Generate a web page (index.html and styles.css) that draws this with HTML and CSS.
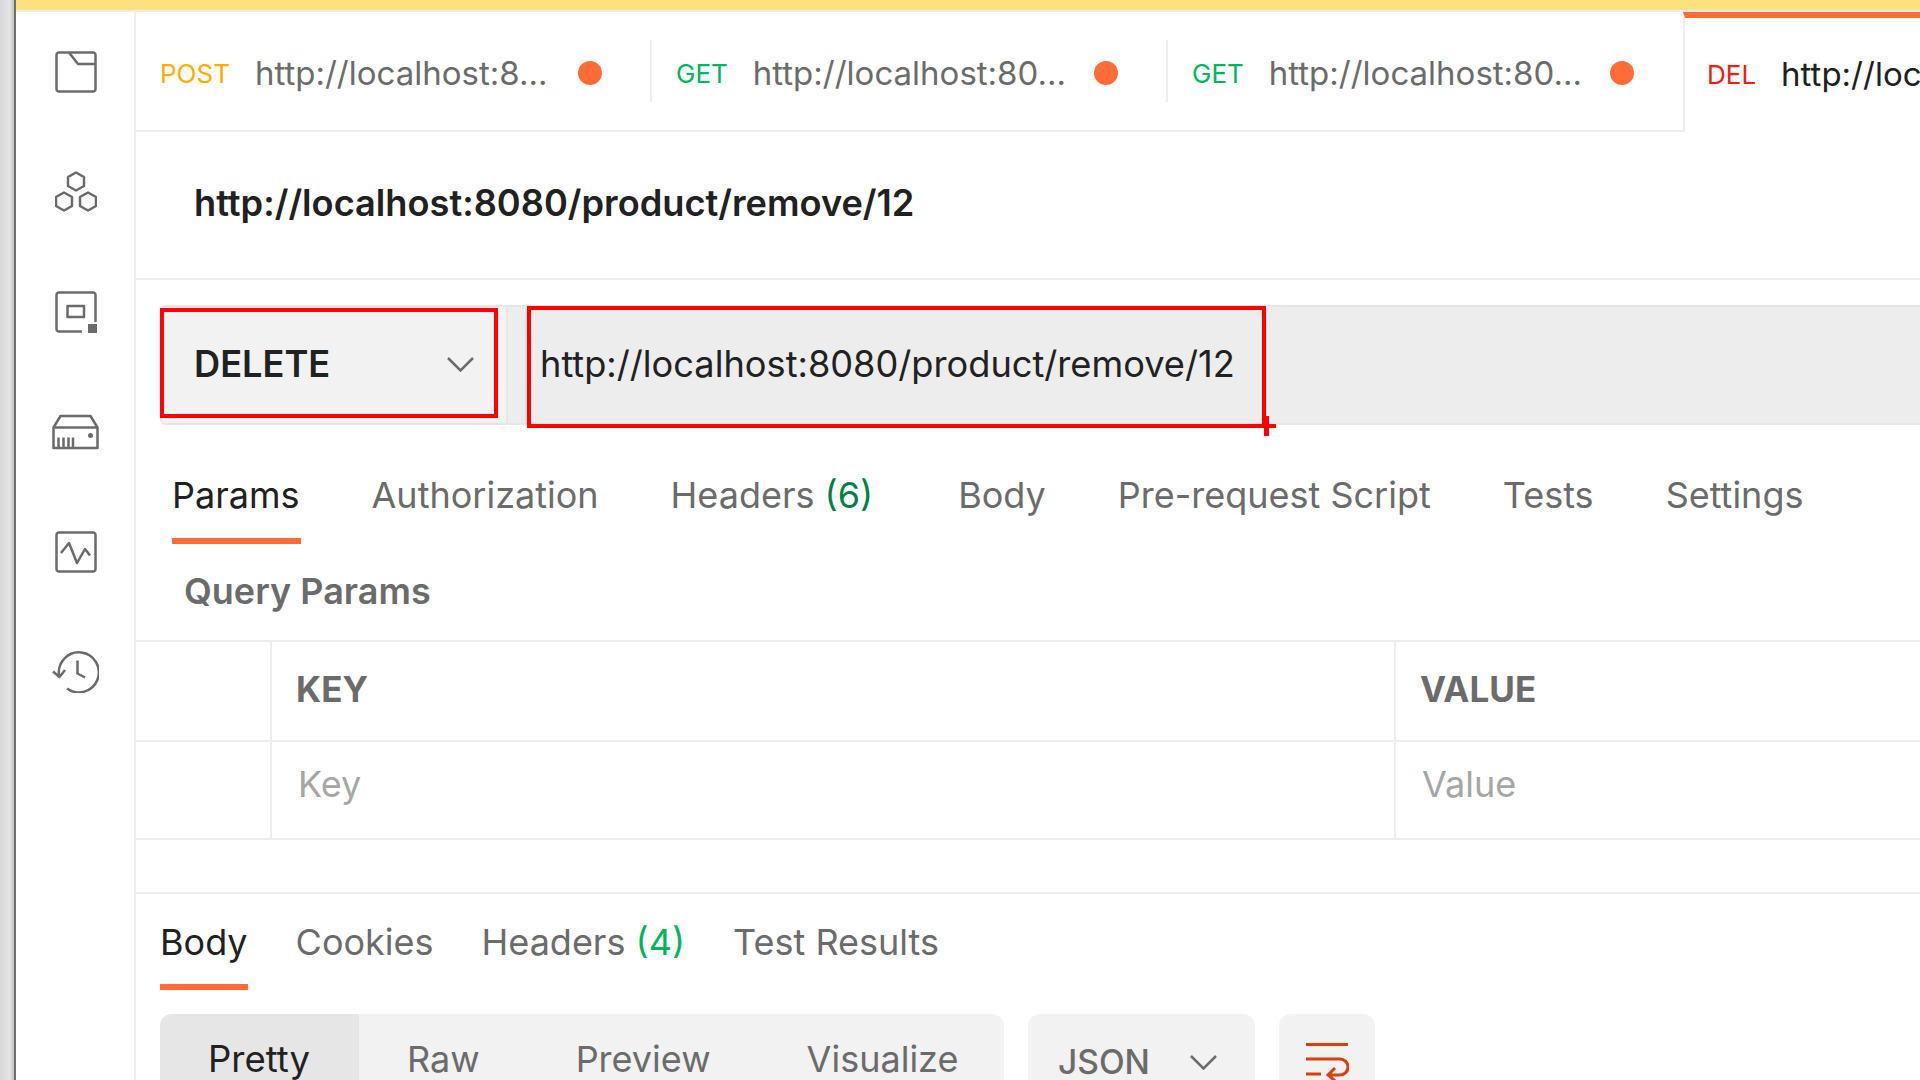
FILE: index.html
```html
<!DOCTYPE html>
<html lang="en">
<head>
    <meta charset="UTF-8">
    <title>Postman request</title>
    <link rel="stylesheet" href="styles.css">
</head>
<body>
    <div class="strip"></div>
    <div class="main">
        <div class="notice"></div>
        <div class="app">
            <nav class="sidebar">
                <svg class="nav-icon" viewBox="0 0 42 42"><path d="M4 1.500h34a2.500 2.500 0 0 1 2.500 2.500v34a2.500 2.500 0 0 1-2.500 2.500H4A2.500 2.500 0 0 1 1.500 38V4A2.500 2.500 0 0 1 4 1.500zM14 1.500l9 11.500h17.500"/></svg>
                <svg class="nav-icon" viewBox="0 0 42 42"><path d="M21 1.500l8 4.500v9l-8 4.500-8-4.500V6zM9 21.500l8 4.500v9l-8 4.500L1 35v-9zM33 21.500l8 4.500v9l-8 4.500-8-4.500v-9z"/></svg>
                <svg class="nav-icon" viewBox="0 0 42 42"><path d="M27 40.500H4A2.500 2.500 0 0 1 1.500 38V4A2.500 2.500 0 0 1 4 1.500h34A2.500 2.500 0 0 1 40.500 4v27M12.500 15h16.500v11H12.500z"/><rect class="fill" x="33" y="33" width="9" height="9"/></svg>
                <svg class="nav-icon wide" viewBox="0 0 47 35"><path d="M1.500 33.500V13L8.500 1.500h30L45.500 13v20.500zM1.500 13h44M6.500 33.500V23M11.500 33.500V23M16.500 33.500V23M21 33.500V23"/><circle class="fill" cx="38.500" cy="21" r="2.500"/></svg>
                <svg class="nav-icon" viewBox="0 0 42 42"><path d="M4 1.500h34A2.500 2.500 0 0 1 40.500 4v34a2.500 2.500 0 0 1-2.500 2.500H4A2.500 2.500 0 0 1 1.500 38V4A2.500 2.500 0 0 1 4 1.500zM6 22l8-10 8 20 8-14 5 6.500"/></svg>
                <svg class="nav-icon wide" viewBox="0 0 47 42"><path d="M7 24A20 20 0 1 1 15 37.500M1 20.500l6.500 5.500L13 19M25.500 9.500v13L33 26.500"/></svg>
            </nav>
            <section class="content">
                <div class="tabs">
                    <div class="tab first"><span class="method post">POST</span><span class="tab-url">http://localhost:8...</span><span class="dot"></span></div>
                    <div class="tab"><span class="method get">GET</span><span class="tab-url">http://localhost:80...</span><span class="dot"></span></div>
                    <div class="tab last"><span class="method get">GET</span><span class="tab-url">http://localhost:80...</span><span class="dot"></span></div>
                    <div class="tab active"><span class="method del">DEL</span><span class="tab-url">http://localhost:8080/product/remove/12</span></div>
                </div>
                <h1 class="title">http://localhost:8080/product/remove/12</h1>
                <div class="request">
                    <div class="verb"><span>DELETE</span><svg class="chevron" viewBox="0 0 27 15"><path d="M1 1l12.500 12.500L26 1"/></svg></div>
                    <div class="address">http://localhost:8080/product/remove/12</div>
                    <div class="mark mark-verb"></div>
                    <div class="mark mark-url"></div>
                    <div class="cursor"></div>
                </div>
                <div class="req-tabs">
                    <span class="req-tab on">Params</span>
                    <span class="req-tab">Authorization</span>
                    <span class="req-tab headers">Headers <em class="count dark">(6)</em></span>
                    <span class="req-tab">Body</span>
                    <span class="req-tab">Pre-request Script</span>
                    <span class="req-tab">Tests</span>
                    <span class="req-tab">Settings</span>
                </div>
                <div class="query-title">Query Params</div>
                <div class="row head">
                    <div class="cell check"></div>
                    <div class="cell key">KEY</div>
                    <div class="cell">VALUE</div>
                </div>
                <div class="row empty">
                    <div class="cell check"></div>
                    <div class="cell key">Key</div>
                    <div class="cell">Value</div>
                </div>
                <div class="gap"></div>
                <div class="res-tabs">
                    <span class="res-tab on">Body</span>
                    <span class="res-tab">Cookies</span>
                    <span class="res-tab">Headers <em class="count">(4)</em></span>
                    <span class="res-tab">Test Results</span>
                </div>
                <div class="toolbar">
                    <div class="views">
                        <span class="view on">Pretty</span>
                        <span class="view">Raw</span>
                        <span class="view">Preview</span>
                        <span class="view">Visualize</span>
                    </div>
                    <div class="format"><span>JSON</span><svg class="chevron" viewBox="0 0 27 15"><path d="M1 1l12.500 12.500L26 1"/></svg></div>
                    <div class="wrap">
                        <svg viewBox="0 0 44 40"><path d="M1 1.500h42M1 16h34a8 8 0 0 1 0 16H24M1 31h15M30 25l-7 7 7 6"/></svg>
                    </div>
                </div>
            </section>
        </div>
    </div>
</body>
</html>
```

FILE: styles.css
```css
* {
    box-sizing: border-box;
}
html, body {
    margin: 0;
    height: 1080px;
    overflow: hidden;
}
body {
    display: flex;
    font-family: Inter, "Liberation Sans", sans-serif;
    background-color: #fff;
    color: #6b6b6b;
}
.strip {
    width: 16px;
    flex: none;
    background: linear-gradient(to right, #d8d8d8, #e4e4e4 60%, #c4c4c4 86%, #6e6e6e 87%);
}
.main {
    flex: 1;
    min-width: 0;
}
.notice {
    height: 12px;
    background-color: #ffe07f;
    border-bottom: 2px solid #ededed;
}
.app {
    display: flex;
    height: 1068px;
}
.sidebar {
    width: 120px;
    flex: none;
    border-right: 2px solid #ededed;
    display: flex;
    flex-direction: column;
    align-items: center;
    padding: 39px 0 0 1px;
    gap: 78px;
}
.nav-icon {
    width: 42px;
    height: 42px;
    flex: none;
    fill: none;
    stroke: #6b6b6b;
    stroke-width: 2.500;
    stroke-linejoin: round;
}
.nav-icon.wide {
    width: 47px;
}
.nav-icon .fill {
    fill: #6b6b6b;
    stroke: none;
}
.content {
    flex: 1;
    min-width: 0;
    overflow: hidden;
}

/* open tabs */
.tabs {
    display: flex;
    height: 120px;
    border-bottom: 2px solid #ededed;
    align-items: stretch;
}
.tab {
    width: 516px;
    flex: none;
    display: flex;
    align-items: center;
    gap: 25px;
    padding: 4px 0 0 26px;
    position: relative;
    font-size: 33px;
}
.tab.first {
    width: 514px;
    padding-left: 24px;
}
.tab.last {
    width: 517px;
}
.tab + .tab::before {
    content: "";
    position: absolute;
    left: 0;
    top: 28px;
    bottom: 28px;
    width: 2px;
    background-color: #ededed;
}
.method {
    font-size: 26px;
    flex: none;
}
.post { color: #ffad00; }
.get { color: #00b35f; }
.del { color: #eb2013; }
.tab-url {
    white-space: nowrap;
    flex: none;
}
.dot {
    width: 24px;
    height: 24px;
    border-radius: 50%;
    background-color: #ff6c37;
    flex: none;
    margin-left: 3px;
}
.first .dot {
    margin-left: 6px;
}
.tab.active {
    background-color: #fff;
    border-top: 6px solid #ff6c37;
    border-left: 2px solid #ededed;
    margin-bottom: -2px;
    flex: 1;
    min-width: 0;
    padding: 0 0 2px 22px;
    overflow: hidden;
}
.tab.active::before {
    display: none;
}
.tab.active .tab-url {
    color: #212121;
}

/* title */
.title {
    margin: 0;
    height: 148px;
    padding: 0 0 4px 58px;
    border-bottom: 2px solid #ededed;
    display: flex;
    align-items: center;
    font-size: 36.200px;
    font-weight: 600;
    color: #212121;
}

/* request bar */
.request {
    margin: 25px 0 0 24px;
    height: 120px;
    position: relative;
    display: flex;
    font-size: 36.200px;
    border: 2px solid #e6e6e6;
    border-right: none;
    border-radius: 6px 0 0 6px;
    color: #212121;
}
.verb {
    width: 346px;
    flex: none;
    background-color: #f2f2f2;
    border-right: 2px solid #e6e6e6;
    display: flex;
    align-items: center;
    justify-content: space-between;
    padding: 0 32px 2px 32px;
    font-weight: 600;
}
.verb .chevron {
    width: 27px;
    height: 15px;
}
.chevron {
    fill: none;
    stroke: #6b6b6b;
    stroke-width: 2.500;
}
.address {
    flex: 1;
    background-color: #ededed;
    display: flex;
    align-items: center;
    padding: 0 0 2px 32px;
    white-space: nowrap;
}
.mark {
    position: absolute;
    border: 4px solid #fe0000;
}
.mark-verb {
    left: -2px;
    top: 1px;
    width: 338px;
    height: 110px;
}
.mark-url {
    left: 365px;
    top: -1px;
    width: 739px;
    height: 122px;
}
.cursor {
    position: absolute;
    left: 1102px;
    top: 109px;
    width: 5px;
    height: 20px;
    background-color: #fe0000;
}
.cursor::after {
    content: "";
    position: absolute;
    left: -7px;
    top: 8px;
    width: 19px;
    height: 4px;
    background-color: #fe0000;
}

/* request tabs */
.req-tabs {
    display: flex;
    height: 119px;
    padding-left: 36px;
    gap: 71px;
    font-size: 36px;
    line-height: 44px;
}
.req-tab {
    padding: 48px 1px 0 0;
    white-space: nowrap;
    border-bottom: 6px solid transparent;
}
.req-tab.on {
    color: #212121;
    border-bottom-color: #ff6c37;
}
.req-tab.headers {
    margin-right: 13px;
}
.count {
    font-style: normal;
    color: #00b35f;
}
.count.dark {
    color: #007f46;
}
.query-title {
    height: 98px;
    padding: 25px 0 0 48px;
    font-size: 36px;
    line-height: 44px;
    font-weight: 600;
    border-bottom: 2px solid #ededed;
}
.row {
    display: flex;
    height: 98px;
    border-bottom: 2px solid #ededed;
    font-size: 36px;
}
.row.head {
    height: 100px;
}
.cell {
    padding-left: 24px;
    display: flex;
    align-items: center;
    border-left: 2px solid #ededed;
    flex: 1;
}
.check {
    width: 134px;
    flex: none;
    border-left: none;
    padding: 0;
}
.cell.key {
    width: 1124px;
    flex: none;
}
.head .cell {
    font-weight: 700;
    font-size: 35px;
    padding-bottom: 4px;
}
.empty .cell {
    color: #a6a6a6;
    padding-left: 26px;
    padding-bottom: 12px;
}
.gap {
    height: 54px;
    border-bottom: 2px solid #ededed;
}

/* response */
.res-tabs {
    display: flex;
    height: 96px;
    padding-left: 24px;
    gap: 48px;
    font-size: 36px;
    line-height: 44px;
}
.res-tab {
    padding-top: 26px;
    white-space: nowrap;
    border-bottom: 6px solid transparent;
}
.res-tab.on {
    color: #212121;
    border-bottom-color: #ff6c37;
}
.toolbar {
    display: flex;
    margin: 24px 0 0 24px;
    gap: 24px;
    font-size: 36px;
    line-height: 44px;
}
.views, .format, .wrap {
    background-color: #f2f2f2;
    border-radius: 12px;
    height: 100px;
    flex: none;
}
.views {
    display: flex;
    width: 844px;
    overflow: hidden;
}
.view {
    padding: 23px 48px 0 48px;
}
.view.on {
    background-color: #e6e6e6;
    color: #212121;
    font-size: 36.500px;
    padding-right: 49px;
}
.format {
    width: 227px;
    padding: 26px 0 0 30px;
    display: flex;
    gap: 40px;
    font-size: 33.500px;
    font-weight: 500;
}
.format .chevron {
    width: 27px;
    height: 15px;
    margin-top: 15px;
}
.wrap {
    width: 96px;
    padding: 29px 0 0 26px;
}
.wrap svg {
    width: 44px;
    height: 40px;
    fill: none;
    stroke: #d9400e;
    stroke-width: 3;
    display: block;
}
```
